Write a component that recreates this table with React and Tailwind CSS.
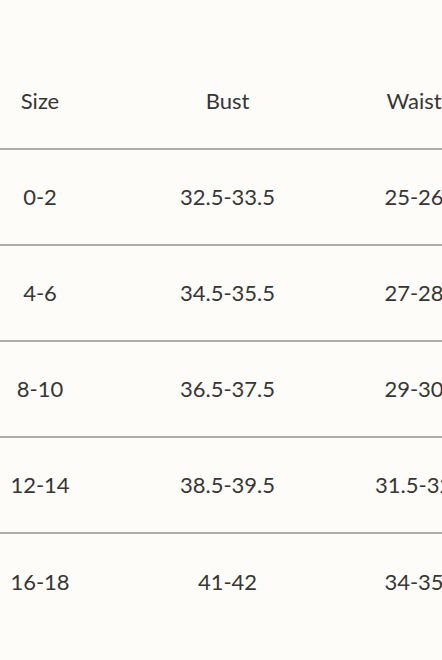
const rows = [
  ["0-2", "32.5-33.5", "25-26"],
  ["4-6", "34.5-35.5", "27-28"],
  ["8-10", "36.5-37.5", "29-30"],
  ["12-14", "38.5-39.5", "31.5-32.5"],
  ["16-18", "41-42", "34-35"],
];

function Row({ cells, border }) {
  return (
    <div
      className={
        "grid grid-cols-[80px_295px_78px] h-[96px] pb-[2px] items-center w-[453px] " +
        (border ? "border-b-2 border-[#ababab]" : "")
      }
    >
      {cells.map((c, i) => (
        <div key={i} className="text-center whitespace-nowrap">
          {c}
        </div>
      ))}
    </div>
  );
}

export default function App() {
  return (
    <div
      className="w-[442px] h-[660px] overflow-hidden bg-[#fdfcf8] text-[#363636] text-[22px] pt-[54px]"
      style={{ fontFamily: "Lato, 'Noto Sans', sans-serif" }}
    >
      <div className="w-[453px]">
        <Row cells={["Size", "Bust", "Waist"]} border />
        {rows.map((r, i) => (
          <Row key={i} cells={r} border={i < rows.length - 1} />
        ))}
      </div>
    </div>
  );
}
